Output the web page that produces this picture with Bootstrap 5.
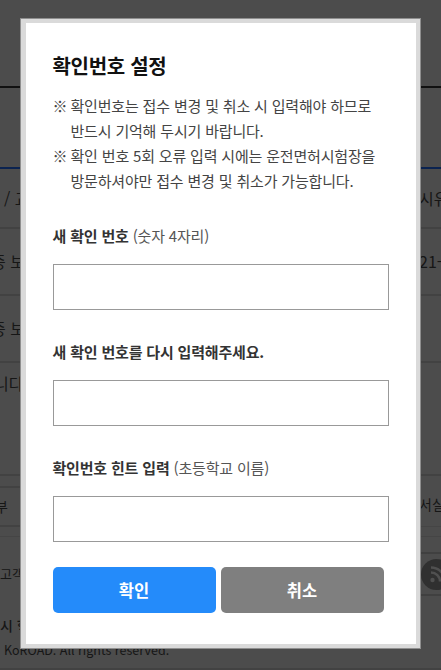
<!DOCTYPE html>
<html lang="ko">
<head>
<meta charset="utf-8">
<meta name="viewport" content="width=device-width, initial-scale=1">
<title>확인번호 설정</title>
<link href="https://cdn.jsdelivr.net/npm/bootstrap@5.3.0/dist/css/bootstrap.min.css" rel="stylesheet">
<style>
body{font-family:"Noto Sans CJK KR","Noto Sans",sans-serif;background:#4c4c4c;color:#161616;font-size:15px}
.page-back{height:670px;background:#4c4c4c}
.strip{border-bottom:2px solid #424242;white-space:nowrap;flex:none;line-height:24px;font-size:16px}
.strip.dark{border-color:#111}
.strip.blue{border-color:#0b2350}
.strip.clear{border-color:transparent}
.strip.thin{border-width:1px;border-color:#454545}
.h-top{height:88px}.h-nav{height:81px}.h-head{height:60px}.h-row{height:67px;padding-bottom:2px}.h-memo{height:113px}
.h-links{height:51px}.h-gap{height:10px}.h-sns{height:59px;border:0!important}.h-copy{height:74px}
.from-left{margin-left:-9px}
.memo-text{margin-left:-6px}
.right-cell{width:22px;flex:none}
.family{width:60px;height:41px;margin-top:10px;border:2px solid #424242;border-left:0;font-size:14px;line-height:37px}
.small-copy{font-size:14px;line-height:24px}
.client{font-size:13px;padding-top:25px}
.sns-box{height:44px;margin-top:15px;border:solid #404040;border-width:2px 0}
.sns-box svg{display:block}
.h-copy{padding-top:17px}
.copyright{font-size:12.5px;line-height:26px}
.popup{top:18px;left:20px;width:401px;height:631px;border:5px solid #dadada;border-left-width:6px;outline:1px solid #8f8f8f;outline-offset:-1px;padding:29px 27px 0 26.5px;letter-spacing:-.18px}
.popup h1{font-size:20px;line-height:28px;color:#111;margin:0 0 13px;letter-spacing:-.3px}
.notice{line-height:25px;color:#444;margin:0 0 31px}
.notice li{padding-left:18px;text-indent:-18px;white-space:nowrap}
.notice .sign{display:inline-block;width:18px;text-indent:0}
.field-name{height:24px;line-height:24px;color:#555;margin-bottom:16px;white-space:nowrap}
.field-name b{color:#333}
.popup .form-control{height:46px;border:1px solid #999;border-radius:0;margin-bottom:30px}
.popup .last-field{margin-bottom:25px}
.popup .btn{width:163px;height:46px;border:0;border-radius:5px;font-size:16.5px;font-weight:700;color:#fff;padding:0;line-height:46px}
.btn-ok{background:#248bfa}.btn-no{background:#7f7f7f}
.btn-pair{gap:5px}
</style>
</head>
<body class="overflow-hidden position-relative">
<div class="page-back d-flex flex-column overflow-hidden" aria-hidden="true">
  <div class="strip dark h-top"></div>
  <div class="strip blue h-nav"></div>
  <div class="strip h-head d-flex align-items-center justify-content-between"><span class="ps-1">/ 교</span><span class="right-cell">시유</span></div>
  <div class="strip h-row d-flex align-items-center justify-content-between"><span class="from-left">증 보</span><span class="right-cell">21-</span></div>
  <div class="strip h-row d-flex align-items-center"><span class="from-left">증 보</span></div>
  <div class="strip h-memo pt-2"><span class="d-block memo-text">니다</span></div>
  <div class="strip thin h-links d-flex justify-content-between"><div class="family"><span class="from-left ps-1">부</span></div><span class="right-cell small-copy pt-3">서실</span></div>
  <div class="strip thin h-gap"></div>
  <div class="strip clear h-sns d-flex justify-content-between">
    <span class="client">고객</span>
    <div class="right-cell">
      <div class="sns-box overflow-hidden">
        <svg width="33" height="40" viewBox="0 0 33 40"><circle cx="17.5" cy="20.5" r="15.5" fill="#303030"/><g fill="none" stroke="#505050" stroke-width="2.5"><path d="M12 18.5a9 9 0 0 1 9 9M12 13.5a14 14 0 0 1 14 14"/></g><circle cx="13.5" cy="26" r="2.2" fill="#505050"/></svg>
      </div>
    </div>
  </div>
  <div class="strip h-copy small-copy d-flex flex-column"><b class="fw-medium">시 혁신</b><span class="ps-1 copyright">KoROAD. All rights reserved.</span></div>
</div>
<section class="popup position-absolute bg-white" role="dialog" aria-labelledby="popupTitle">
  <h1 id="popupTitle" class="fw-bold">확인번호 설정</h1>
  <ul class="notice list-unstyled">
    <li><span class="sign">※</span>확인번호는 접수 변경 및 취소 시 입력해야 하므로<br>반드시 기억해 두시기 바랍니다.</li>
    <li><span class="sign">※</span>확인 번호 5회 오류 입력 시에는 운전면허시험장을<br>방문하셔야만 접수 변경 및 취소가 가능합니다.</li>
  </ul>
  <form>
    <label class="field-name d-block" for="code"><b>새 확인 번호</b> (숫자 4자리)</label>
    <input id="code" class="form-control shadow-none" type="password" maxlength="4">
    <label class="field-name d-block" for="again"><b>새 확인 번호를 다시 입력해주세요.</b></label>
    <input id="again" class="form-control shadow-none" type="password" maxlength="4">
    <label class="field-name d-block" for="hint"><b>확인번호 힌트 입력</b> (초등학교 이름)</label>
    <input id="hint" class="form-control shadow-none last-field" type="text">
    <div class="btn-pair d-flex">
      <button type="button" class="btn btn-ok">확인</button>
      <button type="button" class="btn btn-no">취소</button>
    </div>
  </form>
</section>
<script src="https://cdn.jsdelivr.net/npm/bootstrap@5.3.0/dist/js/bootstrap.bundle.min.js"></script>
</body>
</html>
